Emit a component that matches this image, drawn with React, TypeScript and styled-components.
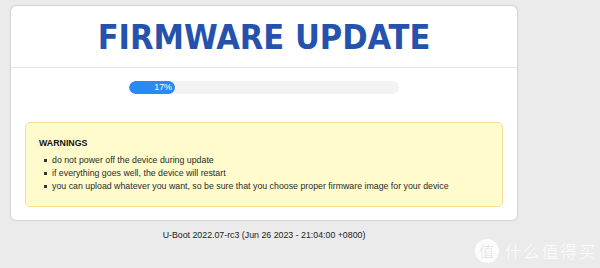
import React from "react";
import styled, { createGlobalStyle } from "styled-components";

const Global = createGlobalStyle`
  html, body { margin: 0; padding: 0; background: #ebebeb; }
  body { font-family: "Liberation Sans", Arial, sans-serif; color: #222; }
`;

const Page = styled.div`
  position: relative;
  width: 600px;
  height: 268px;
  overflow: hidden;
  padding: 6px 0 0 11px;
  box-sizing: border-box;
`;

const Card = styled.div`
  width: 506px;
  background: #fff;
  border-radius: 5px;
  box-shadow: 0 0 2px rgba(0, 0, 0, 0.35);
  box-sizing: border-box;
`;

const Header = styled.div`
  height: 61px;
  display: flex;
  align-items: center;
  justify-content: center;
  border-bottom: 1px solid #e6e6e6;
`;

const Title = styled.h1`
  margin: 0;
  font-family: "DejaVu Sans Condensed", "DejaVu Sans", Verdana, sans-serif;
  font-weight: bold;
  font-size: 34px;
  color: #2452ad;
  line-height: 1;
`;

const Body = styled.div`
  padding: 13px 14px 13px;
  display: flex;
  flex-direction: column;
  align-items: center;
`;

const Track = styled.div`
  width: 270px;
  height: 13px;
  border-radius: 7px;
  background: #f3f3f3;
  overflow: hidden;
`;

const Fill = styled.div`
  height: 100%;
  background: #2b89f5;
  border-radius: 7px;
  color: #fff;
  font-size: 8.8px;
  line-height: 13px;
  text-align: right;
  padding-right: 3px;
  box-sizing: border-box;
`;

const Warn = styled.div`
  align-self: stretch;
  margin-top: 28px;
  height: 85px;
  box-sizing: border-box;
  background: #fffbcc;
  border: 1px solid #f7df8f;
  border-radius: 5px;
  padding: 15px 13px 0;
`;

const WarnTitle = styled.div`
  font-weight: bold;
  font-size: 8.8px;
  color: #111;
  margin-bottom: 6px;
`;

const List = styled.ul`
  margin: 0;
  padding-left: 13px;
  list-style: none;
  font-size: 8.8px;
  line-height: 13px;
  color: #2a2a2a;
`;

const Item = styled.li`
  position: relative;
  &::before {
    content: "";
    position: absolute;
    left: -8px;
    top: 5px;
    width: 3px;
    height: 3px;
    background: #333;
  }
`;

const Footer = styled.div`
  width: 506px;
  text-align: center;
  font-size: 8.8px;
  color: #222;
  margin-top: 10px;
`;

const Watermark = styled.div`
  position: absolute;
  right: 3px;
  bottom: 5px;
  display: flex;
  align-items: center;
  gap: 6px;
  color: rgba(255, 255, 255, 0.9);
  font-family: "Noto Sans CJK SC", sans-serif;
  font-weight: 300;
  font-size: 17px;
  letter-spacing: 1.5px;
`;

const Badge = styled.span`
  width: 24px;
  height: 24px;
  border-radius: 50%;
  background: rgba(255, 255, 255, 0.85);
  color: #e2e2e2;
  font-size: 15px;
  letter-spacing: 0;
  display: flex;
  align-items: center;
  justify-content: center;
`;

export default function App() {
  const pct = 17;
  return (
    <>
      <Global />
      <Page>
        <Card>
          <Header>
            <Title>FIRMWARE UPDATE</Title>
          </Header>
          <Body>
            <Track>
              <Fill style={{ width: `${pct}%` }}>{pct}%</Fill>
            </Track>
            <Warn>
              <WarnTitle>WARNINGS</WarnTitle>
              <List>
                <Item>do not power off the device during update</Item>
                <Item>if everything goes well, the device will restart</Item>
                <Item>you can upload whatever you want, so be sure that you choose proper firmware image for your device</Item>
              </List>
            </Warn>
          </Body>
        </Card>
        <Footer>U-Boot 2022.07-rc3 (Jun 26 2023 - 21:04:00 +0800)</Footer>
        <Watermark>
          <Badge>值</Badge>
          什么值得买
        </Watermark>
      </Page>
    </>
  );
}
